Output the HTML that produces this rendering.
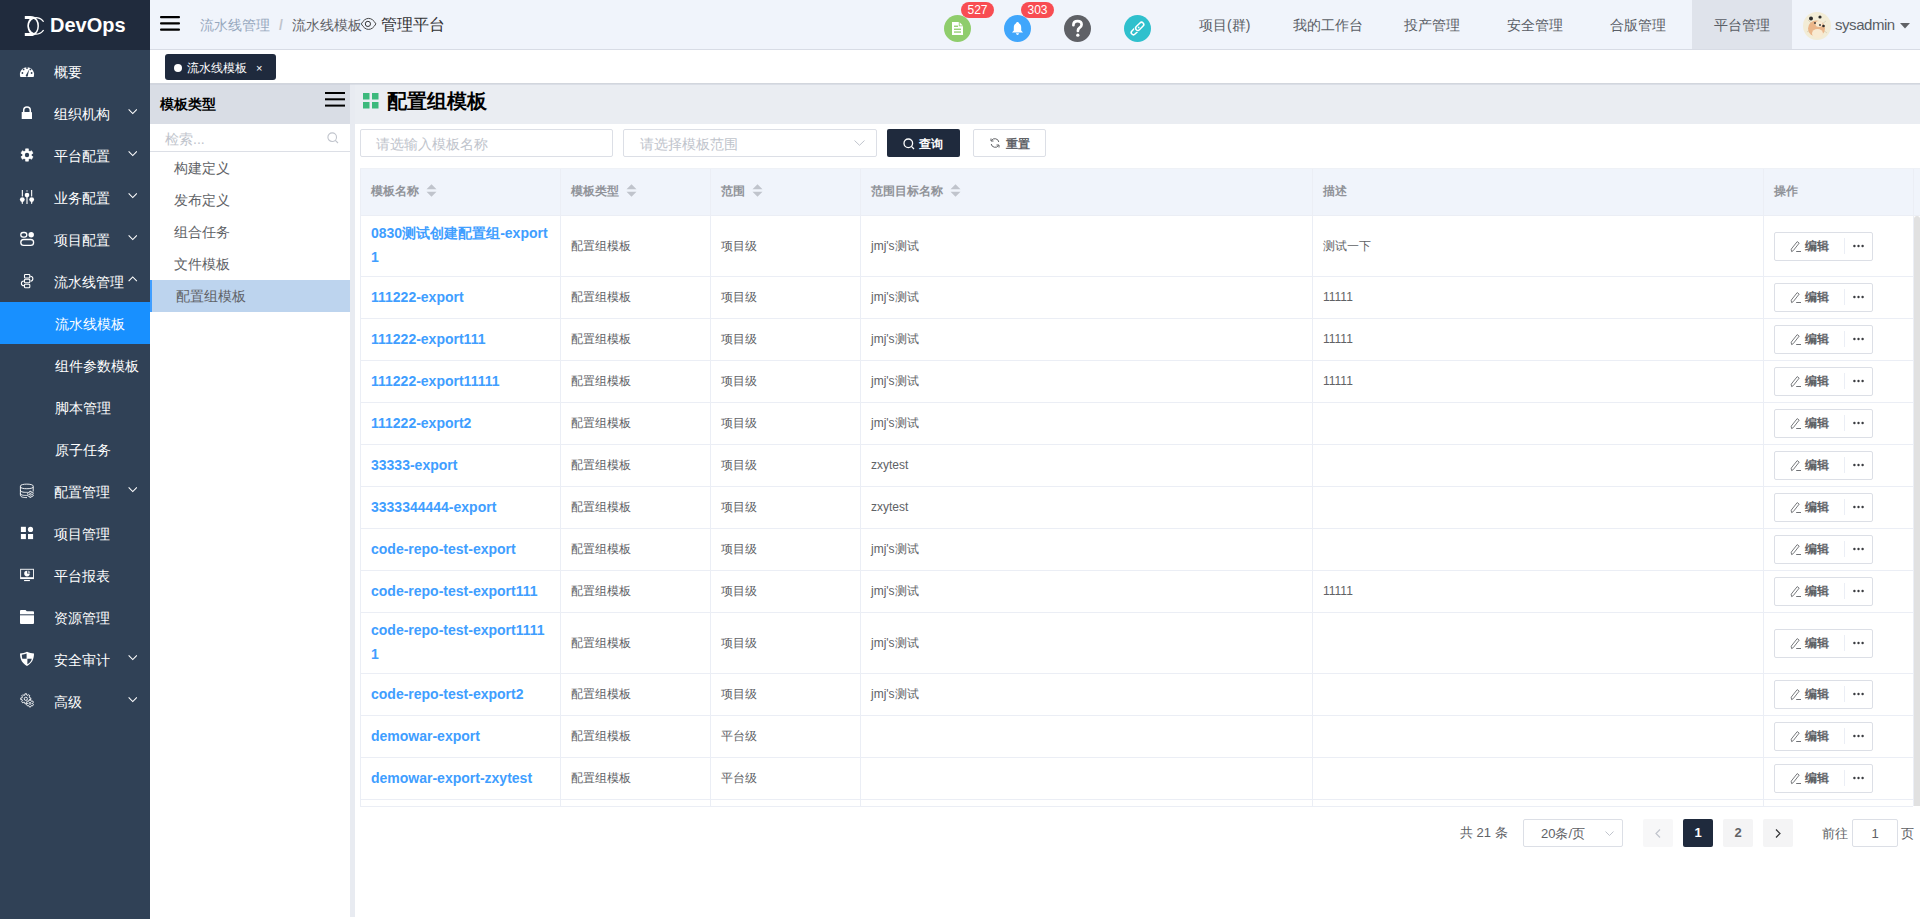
<!DOCTYPE html><html><head><meta charset="utf-8"><style>
*{box-sizing:border-box;margin:0;padding:0}
html,body{width:1920px;height:919px;overflow:hidden;background:#fff;font-family:"Liberation Sans",sans-serif;}
.ab{position:absolute}
.side{position:absolute;left:0;top:0;width:150px;height:919px;background:#304156}
.logo{position:absolute;left:0;top:0;width:150px;height:50px;background:#202b3d}
.mi{position:absolute;left:0;width:150px;height:42px;color:#fff;font-size:14px;line-height:42px}
.mi .t{position:absolute;left:54px;top:1px;white-space:nowrap}
.mi .ic{position:absolute;left:20px;top:14px;width:14px;height:14px}
.mi .ar{position:absolute;left:127.5px;top:17px;width:9.5px;height:5.5px}
.hdr{position:absolute;left:150px;top:0;width:1770px;height:50px;background:#f0f4fb;border-bottom:1px solid #d8dce5}
.nav{position:absolute;top:1px;height:49px;line-height:49px;font-size:14px;color:#5a5e66;white-space:nowrap}
.circ{position:absolute;top:15px;width:27px;height:27px;border-radius:50%}
.badge{position:absolute;top:2px;height:16px;border-radius:8px;background:#f84c52;color:#fff;font-size:12px;line-height:16px;text-align:center}
.tags{position:absolute;left:150px;top:50px;width:1770px;height:33px;background:#fff}
.t12{font-size:12px;color:#606266;white-space:nowrap}
.cellb{position:absolute;background:#ebeef5}
</style></head><body>
<div class="side">
<div class="logo">
<svg class="ab" style="left:0;top:0" width="50" height="50" viewBox="0 0 50 50"><path d="M24.8 16 H30.5 C33.5 16 35.5 17.2 36.6 18.6 L35.6 19.6 C34.6 19.1 33 19 31 19 H24.8 Z" fill="#fff"/><path d="M24.8 36 H30.5 C33.5 36 35.5 34.8 36.6 33.4 L35.6 32.4 C34.6 32.9 33 33 31 33 H24.8 Z" fill="#fff"/><ellipse cx="33.2" cy="25.9" rx="5" ry="8" stroke="#fff" stroke-width="1.5" fill="none"/><path d="M43.6 21.8 A8.2 8.2 0 1 0 43.6 30" stroke="#fff" stroke-width="1.2" fill="none"/></svg>
<div class="ab" style="left:50px;top:12px;font-size:20px;font-weight:bold;color:#fff;line-height:26px">DevOps</div>
</div>
<div class="mi" style="top:50px;">
<span class="t" style="left:54px">概要</span>
</div>
<div class="mi" style="top:92px;">
<span class="t" style="left:54px">组织机构</span>
<svg class="ar" viewBox="0 0 10 6"><path d="M0.5 0.5 L5 5 L9.5 0.5" stroke="#fff" stroke-width="1.2" fill="none"/></svg>
</div>
<div class="mi" style="top:134px;">
<span class="t" style="left:54px">平台配置</span>
<svg class="ar" viewBox="0 0 10 6"><path d="M0.5 0.5 L5 5 L9.5 0.5" stroke="#fff" stroke-width="1.2" fill="none"/></svg>
</div>
<div class="mi" style="top:176px;">
<span class="t" style="left:54px">业务配置</span>
<svg class="ar" viewBox="0 0 10 6"><path d="M0.5 0.5 L5 5 L9.5 0.5" stroke="#fff" stroke-width="1.2" fill="none"/></svg>
</div>
<div class="mi" style="top:218px;">
<span class="t" style="left:54px">项目配置</span>
<svg class="ar" viewBox="0 0 10 6"><path d="M0.5 0.5 L5 5 L9.5 0.5" stroke="#fff" stroke-width="1.2" fill="none"/></svg>
</div>
<div class="mi" style="top:260px;">
<span class="t" style="left:54px">流水线管理</span>
<svg class="ar" style="left:128px;top:16px" viewBox="0 0 10 6"><path d="M0.5 5.5 L5 1 L9.5 5.5" stroke="#fff" stroke-width="1.2" fill="none"/></svg>
</div>
<div class="mi" style="top:302px;background:#1890ff;">
<span class="t" style="left:55px">流水线模板</span>
</div>
<div class="mi" style="top:344px;">
<span class="t" style="left:55px">组件参数模板</span>
</div>
<div class="mi" style="top:386px;">
<span class="t" style="left:55px">脚本管理</span>
</div>
<div class="mi" style="top:428px;">
<span class="t" style="left:55px">原子任务</span>
</div>
<div class="mi" style="top:470px;">
<span class="t" style="left:54px">配置管理</span>
<svg class="ar" viewBox="0 0 10 6"><path d="M0.5 0.5 L5 5 L9.5 0.5" stroke="#fff" stroke-width="1.2" fill="none"/></svg>
</div>
<div class="mi" style="top:512px;">
<span class="t" style="left:54px">项目管理</span>
</div>
<div class="mi" style="top:554px;">
<span class="t" style="left:54px">平台报表</span>
</div>
<div class="mi" style="top:596px;">
<span class="t" style="left:54px">资源管理</span>
</div>
<div class="mi" style="top:638px;">
<span class="t" style="left:54px">安全审计</span>
<svg class="ar" viewBox="0 0 10 6"><path d="M0.5 0.5 L5 5 L9.5 0.5" stroke="#fff" stroke-width="1.2" fill="none"/></svg>
</div>
<div class="mi" style="top:680px;">
<span class="t" style="left:54px">高级</span>
<svg class="ar" viewBox="0 0 10 6"><path d="M0.5 0.5 L5 5 L9.5 0.5" stroke="#fff" stroke-width="1.2" fill="none"/></svg>
</div>
<svg class="ab" style="left:0;top:0;z-index:2" width="150" height="919" viewBox="0 0 150 919">
<!-- dashboard -->
<path d="M20.4 77 A7.1 7.1 0 1 1 33.6 77 Z" fill="#fff"/>
<circle cx="22.4" cy="73" r="0.9" fill="#304156"/><circle cx="23.6" cy="69.4" r="0.9" fill="#304156"/><circle cx="27" cy="68" r="0.9" fill="#304156"/><circle cx="30.4" cy="69.4" r="0.9" fill="#304156"/><circle cx="31.6" cy="73" r="0.9" fill="#304156"/>
<path d="M29.2 69.6 L27.9 75.2 A1.1 1.1 0 1 1 26.1 74.8 Z" fill="#304156"/>
<!-- lock -->
<path d="M23.7 112 V110.2 A3.3 3.3 0 0 1 30.3 110.2 V112" stroke="#fff" stroke-width="1.5" fill="none"/>
<rect x="21.7" y="112" width="10.3" height="7.1" rx="0.4" fill="#fff"/>
<!-- gear -->
<path d="M25.54 150.74 L25.56 148.87 L28.44 148.87 L28.46 150.74 L29.95 151.61 L31.59 150.69 L33.03 153.18 L31.42 154.14 L31.42 155.86 L33.03 156.82 L31.59 159.31 L29.95 158.39 L28.46 159.26 L28.44 161.13 L25.56 161.13 L25.54 159.26 L24.05 158.39 L22.41 159.31 L20.97 156.82 L22.58 155.86 L22.58 154.14 L20.97 153.18 L22.41 150.69 L24.05 151.61 Z" fill="#fff" stroke="#fff" stroke-width="0.6" stroke-linejoin="round"/>
<circle cx="27" cy="155" r="2.2" fill="#304156"/>
<!-- sliders -->
<g fill="#fff">
<rect x="21.8" y="190" width="1.1" height="6.5"/><rect x="31.1" y="190" width="1.1" height="6.5"/>
<rect x="26.4" y="190" width="1.2" height="1.8" opacity="0.6"/>
<circle cx="22.3" cy="199.6" r="2.4"/><path d="M21.5 201 H23.1 L22.7 204 H21.9 Z"/>
<circle cx="31.7" cy="199.6" r="2.4"/><path d="M30.9 201 H32.5 L32.1 204 H31.3 Z"/>
<circle cx="27" cy="195.1" r="2.3"/><rect x="26.3" y="196" width="1.4" height="8" opacity="0.8"/>
</g>
<!-- project config -->
<rect x="20.8" y="232.5" width="6" height="4.6" rx="2.3" stroke="#fff" stroke-width="1.3" fill="none"/>
<circle cx="31.2" cy="234.8" r="2.7" fill="#fff"/>
<rect x="20.8" y="239.5" width="12.8" height="5.8" rx="2.9" stroke="#fff" stroke-width="1.3" fill="none"/>
<!-- pipeline -->
<g stroke="#fff" stroke-width="1.1" fill="none">
<rect x="24.5" y="274.5" width="5.3" height="3.5" rx="0.8"/><rect x="24.5" y="279.3" width="5.3" height="3.5" rx="0.8"/><rect x="24.5" y="284.2" width="5.3" height="3.5" rx="0.8"/>
<path d="M30.3 276.3 C33.5 276.3 33.8 280.7 30.6 281.3"/>
<path d="M24 281 C20.5 281.3 20.5 285.5 24 285.8"/>
</g>
<!-- db -->
<g stroke="#fff" stroke-width="0.9" fill="none">
<path d="M20.4 486 C20.4 483.5 33.2 483.5 33.2 486 V491.5"/>
<path d="M20.4 486 V495 C20.4 497.3 24 497.6 27 497.6"/>
<path d="M20.4 487 C20.4 489.3 33.2 489.3 33.2 487"/>
<path d="M20.4 490.2 C20.4 492.3 25 492.5 27.5 492.3"/>
<path d="M20.4 493.4 C20.4 495.3 24 495.5 26.8 495.4"/>
<path d="M29.65 492.12 L29.69 491.28 L31.11 491.28 L31.15 492.12 L31.91 492.56 L32.66 492.18 L33.37 493.40 L32.66 493.86 L32.66 494.74 L33.37 495.20 L32.66 496.42 L31.91 496.04 L31.15 496.48 L31.11 497.32 L29.69 497.32 L29.65 496.48 L28.89 496.04 L28.14 496.42 L27.43 495.20 L28.14 494.74 L28.14 493.86 L27.43 493.40 L28.14 492.18 L28.89 492.56 Z" stroke-linejoin="round"/>
<circle cx="30.4" cy="494.3" r="0.9"/>
</g>
<!-- grid -->
<g fill="#fff">
<rect x="20.9" y="526.8" width="5" height="5.2"/>
<circle cx="30.5" cy="529.4" r="2.6"/>
<rect x="20.9" y="534" width="5" height="5.1"/>
<rect x="28" y="534" width="5.1" height="5.1"/>
</g>
<!-- monitor -->
<rect x="20.6" y="569.3" width="12.9" height="9.3" stroke="#fff" stroke-width="1" fill="none" opacity="0.9"/>
<rect x="20.6" y="577.2" width="12.9" height="1.8" fill="#fff"/>
<rect x="24.1" y="580" width="5.8" height="1.1" fill="#fff"/>
<path d="M27 573.6 V570.8 A2.8 2.8 0 1 0 29.8 573.6 Z" fill="#fff"/>
<path d="M27.6 573 V570.4 A2.6 2.6 0 0 1 30.2 573 Z" fill="#fff" opacity="0.6"/>
<!-- folder -->
<path d="M20 611 A1 1 0 0 1 21 610 H25.5 L26.8 611.3 H33 A1 1 0 0 1 34 612.3 V623 A1 1 0 0 1 33 624 H21 A1 1 0 0 1 20 623 Z" fill="#fff"/>
<rect x="20" y="614.3" width="14" height="1" fill="#304156"/>
<!-- shield -->
<path d="M27 651.8 C29.5 653 31.5 653.4 34 653.6 C34 660 31.5 663.6 27 666 C22.5 663.6 20 660 20 653.6 C22.5 653.4 24.5 653 27 651.8 Z" fill="#fff"/>
<path d="M26.6 653.6 V658.7 H22.3 C22 657.3 21.8 656 21.8 654.8 C23.5 654.6 25 654.3 26.6 653.6 Z" fill="#304156"/>
<path d="M27.4 658.7 H31.8 C31.2 661.2 29.8 663 27.4 664.3 Z" fill="#304156"/>
<!-- advanced gears -->
<g stroke="#fff" stroke-width="0.9" fill="none" stroke-linejoin="round">
<path d="M24.87 695.12 L24.92 693.78 L26.68 693.78 L26.73 695.12 L27.74 695.53 L28.73 694.63 L29.97 695.87 L29.07 696.86 L29.48 697.87 L30.82 697.92 L30.82 699.68 L29.48 699.73 L29.07 700.74 L29.97 701.73 L28.73 702.97 L27.74 702.07 L26.73 702.48 L26.68 703.82 L24.92 703.82 L24.87 702.48 L23.86 702.07 L22.87 702.97 L21.63 701.73 L22.53 700.74 L22.12 699.73 L20.78 699.68 L20.78 697.92 L22.12 697.87 L22.53 696.86 L21.63 695.87 L22.87 694.63 L23.86 695.53 Z"/>
<circle cx="25.8" cy="698.8" r="1.6"/>
<path d="M29.12 700.85 L29.18 699.90 L30.82 699.90 L30.88 700.85 L31.77 701.36 L32.62 700.94 L33.45 702.36 L32.65 702.88 L32.65 703.92 L33.45 704.44 L32.62 705.86 L31.77 705.44 L30.88 705.95 L30.82 706.90 L29.18 706.90 L29.12 705.95 L28.23 705.44 L27.38 705.86 L26.55 704.44 L27.35 703.92 L27.35 702.88 L26.55 702.36 L27.38 700.94 L28.23 701.36 Z" fill="#304156"/>
<circle cx="30" cy="703.4" r="1"/>
</g>
</svg>
</div>
<div class="hdr">
<svg class="ab" style="left:10px;top:16px" width="20" height="15" viewBox="0 0 20 15"><rect x="0" y="0" width="20" height="2.2" rx="1" fill="#000"/><rect x="0" y="6.3" width="20" height="2.2" rx="1" fill="#000"/><rect x="0" y="12.6" width="20" height="2.2" rx="1" fill="#000"/></svg>
<div class="ab" style="left:50px;top:1px;height:49px;line-height:49px;font-size:14px;color:#97a8be;white-space:nowrap">流水线管理</div>
<div class="ab" style="left:129px;top:1px;height:49px;line-height:49px;font-size:14px;color:#c0c4cc;font-weight:bold">/</div>
<div class="ab" style="left:142px;top:1px;height:49px;line-height:49px;font-size:14px;color:#606266;white-space:nowrap">流水线模板</div>
<svg class="ab" style="left:210px;top:17px" width="17" height="14" viewBox="360 17 17 14"><path d="M361.3 23.9 C363.5 20.2 365.8 18.4 368.6 18.4 C371.4 18.4 373.7 20.2 375.9 23.9 C373.7 27.6 371.4 29.4 368.6 29.4 C365.8 29.4 363.5 27.6 361.3 23.9 Z" stroke="#333" stroke-width="0.9" fill="none"/><circle cx="367.9" cy="23.9" r="2.6" stroke="#333" stroke-width="1" fill="none"/></svg>
<div class="ab" style="left:231px;top:0px;height:49px;line-height:49px;font-size:16px;color:#303133;white-space:nowrap">管理平台</div>
</div>
<div class="circ" style="left:944px;background:#8fcd6c"><svg class="ab" style="left:8px;top:7px" width="11" height="13" viewBox="0 0 11 13"><path d="M0 0 H6.8 V4.2 H11 V13 H0 Z" fill="#fff"/><path d="M7.6 0.2 L10.8 3.4 H7.6 Z" fill="#fff"/><rect x="2" y="3.6" width="4" height="1.3" fill="#8fcd6c"/><rect x="2" y="6.6" width="7" height="1.3" fill="#8fcd6c"/><rect x="2" y="9.4" width="7" height="1.3" fill="#8fcd6c"/></svg></div>
<div class="badge" style="left:961px;width:33px">527</div>
<div class="circ" style="left:1004px;background:#40a6fb"><svg class="ab" style="left:8px;top:7px" width="11" height="14" viewBox="0 0 11 14"><path d="M5.5 0 C6.3 0 6.9 0.7 7.2 1.4 C8.8 2 9.2 3.8 9.2 5.8 V8.6 L11 10.6 H0 L1.8 8.6 V5.8 C1.8 3.8 2.2 2 3.8 1.4 C4.1 0.7 4.7 0 5.5 0 Z" fill="#fff"/><path d="M4 11.3 H7 C6.8 12.4 6.2 13 5.5 13 C4.8 13 4.2 12.4 4 11.3 Z" fill="#fff"/></svg></div>
<div class="badge" style="left:1021px;width:33px">303</div>
<div class="circ" style="left:1064px;background:#5f6166"><svg class="ab" style="left:0;top:0" width="27" height="27" viewBox="1064 15 27 27"><path d="M1073.4 25.2 C1073.4 22.6 1075.3 21.2 1077.6 21.2 C1080.1 21.2 1081.6 22.7 1081.6 24.8 C1081.6 26.6 1080.4 27.4 1079.2 28.2 C1078.3 28.8 1077.9 29.4 1077.9 30.9" stroke="#fff" stroke-width="2.7" fill="none" stroke-linecap="round"/><circle cx="1077.8" cy="35.2" r="1.65" fill="#fff"/></svg></div>
<div class="circ" style="left:1124px;background:#2fc0cd"><svg class="ab" style="left:0;top:0" width="27" height="27" viewBox="1124 15 27 27"><g transform="rotate(-45 1137.5 28.5)" fill="none"><rect x="1129.6" y="26.3" width="9.6" height="4.4" rx="2.2" stroke="#fff" stroke-width="1.5"/><rect x="1135.8" y="26.3" width="9.6" height="4.4" rx="2.2" stroke="#2fc0cd" stroke-width="3"/><rect x="1135.8" y="26.3" width="9.6" height="4.4" rx="2.2" stroke="#fff" stroke-width="1.5"/></g></svg></div>
<div class="ab" style="left:1692px;top:0;width:100px;height:49px;background:#dfe3eb"></div>
<div class="nav" style="left:1199px">项目(群)</div>
<div class="nav" style="left:1293px">我的工作台</div>
<div class="nav" style="left:1404px">投产管理</div>
<div class="nav" style="left:1507px">安全管理</div>
<div class="nav" style="left:1610px">合版管理</div>
<div class="nav" style="left:1714px">平台管理</div>
<svg class="ab" style="left:1803px;top:12px" width="28" height="28" viewBox="0 0 28 28"><circle cx="14" cy="14" r="14" fill="#f2ecd6"/><path d="M5 8 L9 12 M23 9 L19 12 M4 20 L8 17 M24 21 L20 18" stroke="#cfc6ad" stroke-width="0.6"/><ellipse cx="13.5" cy="16.5" rx="8.5" ry="8" fill="#eab589"/><ellipse cx="14.5" cy="21.5" rx="5.5" ry="4.5" fill="#f8ead2"/><ellipse cx="16" cy="12" rx="3.5" ry="3" fill="#f8ead2"/><circle cx="8" cy="6.5" r="2" fill="#2b2b2b"/><circle cx="17" cy="5" r="1.6" fill="#2b2b2b"/><circle cx="12" cy="11" r="0.9" fill="#333"/><circle cx="17" cy="13" r="0.9" fill="#333"/><circle cx="20.5" cy="14" r="1.3" fill="#2b2b2b"/></svg>
<div class="nav" style="left:1835px;top:0;font-size:15px;letter-spacing:-0.45px;color:#5a5e66">sysadmin</div>
<svg class="ab" style="left:1900px;top:23px" width="10" height="6" viewBox="0 0 10 6"><path d="M0 0 H10 L5 5.5 Z" fill="#606266"/></svg>
<div class="tags"></div>
<div class="ab" style="left:165px;top:54px;width:111px;height:26px;background:#1f2a3d;border-radius:3px"></div>
<div class="ab" style="left:174px;top:64px;width:8px;height:8px;border-radius:50%;background:#fff"></div>
<div class="ab" style="left:187px;top:55px;height:26px;line-height:26px;font-size:12px;color:#fff;white-space:nowrap">流水线模板</div>
<div class="ab" style="left:256px;top:55px;height:26px;line-height:26px;font-size:11px;color:#fff">×</div>
<div class="ab" style="left:150px;top:83px;width:1770px;height:1px;background:#d2d6dd"></div>
<div class="ab" style="left:150px;top:84px;width:200px;height:835px;background:#fff"></div>
<div class="ab" style="left:150px;top:84px;width:200px;height:40px;background:#d9dde5"></div>
<div class="ab" style="left:160px;top:84px;height:40px;line-height:40px;font-size:14px;font-weight:bold;color:#000;white-space:nowrap">模板类型</div>
<svg class="ab" style="left:325px;top:92px" width="20" height="15" viewBox="0 0 20 15"><rect x="0" y="0" width="20" height="2" fill="#000"/><rect x="0" y="6.3" width="20" height="2" fill="#000"/><rect x="0" y="12.6" width="20" height="2" fill="#000"/></svg>
<div class="ab" style="left:150px;top:124px;width:200px;height:28px;border-bottom:1px solid #dcdfe6"></div>
<div class="ab" style="left:165px;top:125px;height:28px;line-height:28px;font-size:14px;color:#c0c4cc;white-space:nowrap">检索...</div>
<svg class="ab" style="left:327px;top:132px" width="12" height="12" viewBox="0 0 12 12"><circle cx="5.2" cy="5.2" r="4.3" stroke="#c0c4cc" stroke-width="1.1" fill="none"/><path d="M8.3 8.3 L11 11" stroke="#c0c4cc" stroke-width="1.1"/></svg>
<div class="ab" style="left:174px;top:152px;height:32px;line-height:32px;font-size:14px;color:#606266;white-space:nowrap">构建定义</div>
<div class="ab" style="left:174px;top:184px;height:32px;line-height:32px;font-size:14px;color:#606266;white-space:nowrap">发布定义</div>
<div class="ab" style="left:174px;top:216px;height:32px;line-height:32px;font-size:14px;color:#606266;white-space:nowrap">组合任务</div>
<div class="ab" style="left:174px;top:248px;height:32px;line-height:32px;font-size:14px;color:#606266;white-space:nowrap">文件模板</div>
<div class="ab" style="left:150px;top:280px;width:200px;height:32px;background:#bdd4ee"></div>
<div class="ab" style="left:150px;top:280px;width:2px;height:32px;background:#409eff"></div>
<div class="ab" style="left:176px;top:280px;height:32px;line-height:32px;font-size:14px;color:#606266;white-space:nowrap">配置组模板</div>
<div class="ab" style="left:350px;top:84px;width:5px;height:833px;background:#e8ebf1"></div>
<div class="ab" style="left:355px;top:84px;width:1565px;height:40px;background:#eaedf2"></div>
<div class="ab" style="left:150px;top:84px;width:1770px;height:1px;background:rgba(200,205,214,0.45)"></div>
<svg class="ab" style="left:363px;top:93px" width="16" height="16" viewBox="0 0 16 16"><rect x="0" y="0" width="6.5" height="6.5" fill="#3cb97c"/><rect x="9" y="0" width="6.5" height="6.5" fill="#3cb97c"/><rect x="0" y="9" width="6.5" height="6.5" fill="#3cb97c"/><rect x="9" y="9" width="6.5" height="6.5" fill="#3cb97c"/></svg>
<div class="ab" style="left:387px;top:83px;height:36px;line-height:36px;font-size:20px;font-weight:bold;color:#000;white-space:nowrap">配置组模板</div>
<div class="ab" style="left:360px;top:129px;width:253px;height:28px;border:1px solid #dcdfe6;border-radius:2px"></div>
<div class="ab" style="left:376px;top:130px;height:28px;line-height:28px;font-size:14px;color:#c0c4cc;white-space:nowrap">请选输入模板名称</div>
<div class="ab" style="left:623px;top:129px;width:254px;height:28px;border:1px solid #dcdfe6;border-radius:2px"></div>
<div class="ab" style="left:640px;top:130px;height:28px;line-height:28px;font-size:14px;color:#c0c4cc;white-space:nowrap">请选择模板范围</div>
<svg class="ab" style="left:854px;top:140px" width="11" height="6" viewBox="0 0 11 6"><path d="M0.5 0.5 L5.5 5.3 L10.5 0.5" stroke="#c0c4cc" stroke-width="1" fill="none"/></svg>
<div class="ab" style="left:887px;top:129px;width:73px;height:28px;background:#1f2a3d;border-radius:2px"></div>
<svg class="ab" style="left:903px;top:138px" width="12" height="12" viewBox="0 0 12 12"><circle cx="5.3" cy="5.3" r="4.3" stroke="#fff" stroke-width="1.3" fill="none"/><path d="M8.4 8.4 L11 11" stroke="#fff" stroke-width="1.3"/></svg>
<div class="ab" style="left:919px;top:130px;height:28px;line-height:28px;font-size:12px;color:#fff;font-weight:bold;white-space:nowrap">查询</div>
<div class="ab" style="left:973px;top:129px;width:73px;height:28px;border:1px solid #dcdfe6;border-radius:2px"></div>
<svg class="ab" style="left:990px;top:138px" width="10" height="10" viewBox="0 0 10 10"><path d="M8.8 4 A4 4 0 0 0 1.5 2.5 M1.2 6 A4 4 0 0 0 8.5 7.5" stroke="#606266" stroke-width="1" fill="none"/><path d="M1 0.5 V3 H3.5 M9 9.5 V7 H6.5" stroke="#606266" stroke-width="1" fill="none"/></svg>
<div class="ab" style="left:1006px;top:130px;height:28px;line-height:28px;font-size:12px;color:#606266;font-weight:bold;white-space:nowrap">重置</div>
<div class="ab" style="left:360px;top:168px;width:1560px;height:48px;background:#f0f4fb"></div>
<div class="cellb" style="left:360px;top:168px;width:1px;height:638px"></div>
<div class="cellb" style="left:360px;top:806px;width:1553px;height:1px"></div>
<div class="cellb" style="left:560px;top:168px;width:1px;height:638px"></div>
<div class="cellb" style="left:710px;top:168px;width:1px;height:638px"></div>
<div class="cellb" style="left:860px;top:168px;width:1px;height:638px"></div>
<div class="cellb" style="left:1312px;top:168px;width:1px;height:638px"></div>
<div class="cellb" style="left:1763px;top:168px;width:1px;height:638px"></div>
<div class="cellb" style="left:1913px;top:168px;width:1px;height:638px"></div>
<div class="cellb" style="left:360px;top:215px;width:1560px;height:1px"></div>
<div class="cellb" style="left:360px;top:168px;width:1560px;height:1px;background:#eef1f6"></div>
<div class="cellb" style="left:360px;top:276px;width:1553px;height:1px"></div>
<div class="cellb" style="left:360px;top:318px;width:1553px;height:1px"></div>
<div class="cellb" style="left:360px;top:360px;width:1553px;height:1px"></div>
<div class="cellb" style="left:360px;top:402px;width:1553px;height:1px"></div>
<div class="cellb" style="left:360px;top:444px;width:1553px;height:1px"></div>
<div class="cellb" style="left:360px;top:486px;width:1553px;height:1px"></div>
<div class="cellb" style="left:360px;top:528px;width:1553px;height:1px"></div>
<div class="cellb" style="left:360px;top:570px;width:1553px;height:1px"></div>
<div class="cellb" style="left:360px;top:612px;width:1553px;height:1px"></div>
<div class="cellb" style="left:360px;top:673px;width:1553px;height:1px"></div>
<div class="cellb" style="left:360px;top:715px;width:1553px;height:1px"></div>
<div class="cellb" style="left:360px;top:757px;width:1553px;height:1px"></div>
<div class="cellb" style="left:360px;top:799px;width:1553px;height:1px"></div>
<div class="ab" style="left:1914px;top:216px;width:6px;height:590px;background:#e1e1e1;border-radius:3px 3px 0 0"></div>
<div class="ab" style="left:371px;top:168px;height:47px;line-height:47px;font-size:12px;font-weight:bold;color:#909399;white-space:nowrap">模板名称
<svg style="display:inline-block;vertical-align:middle;margin-left:4px;margin-top:-2px" width="11" height="13" viewBox="0 0 11 13"><path d="M5.5 0.3 L10.5 5.3 H0.5 Z" fill="#c0c4cc"/><path d="M5.5 12.7 L10.5 7.7 H0.5 Z" fill="#c0c4cc"/></svg>
</div>
<div class="ab" style="left:571px;top:168px;height:47px;line-height:47px;font-size:12px;font-weight:bold;color:#909399;white-space:nowrap">模板类型
<svg style="display:inline-block;vertical-align:middle;margin-left:4px;margin-top:-2px" width="11" height="13" viewBox="0 0 11 13"><path d="M5.5 0.3 L10.5 5.3 H0.5 Z" fill="#c0c4cc"/><path d="M5.5 12.7 L10.5 7.7 H0.5 Z" fill="#c0c4cc"/></svg>
</div>
<div class="ab" style="left:721px;top:168px;height:47px;line-height:47px;font-size:12px;font-weight:bold;color:#909399;white-space:nowrap">范围
<svg style="display:inline-block;vertical-align:middle;margin-left:4px;margin-top:-2px" width="11" height="13" viewBox="0 0 11 13"><path d="M5.5 0.3 L10.5 5.3 H0.5 Z" fill="#c0c4cc"/><path d="M5.5 12.7 L10.5 7.7 H0.5 Z" fill="#c0c4cc"/></svg>
</div>
<div class="ab" style="left:871px;top:168px;height:47px;line-height:47px;font-size:12px;font-weight:bold;color:#909399;white-space:nowrap">范围目标名称
<svg style="display:inline-block;vertical-align:middle;margin-left:4px;margin-top:-2px" width="11" height="13" viewBox="0 0 11 13"><path d="M5.5 0.3 L10.5 5.3 H0.5 Z" fill="#c0c4cc"/><path d="M5.5 12.7 L10.5 7.7 H0.5 Z" fill="#c0c4cc"/></svg>
</div>
<div class="ab" style="left:1323px;top:168px;height:47px;line-height:47px;font-size:12px;font-weight:bold;color:#909399;white-space:nowrap">描述
</div>
<div class="ab" style="left:1774px;top:168px;height:47px;line-height:47px;font-size:12px;font-weight:bold;color:#909399;white-space:nowrap">操作
</div>
<div class="ab" style="left:371px;top:221px;line-height:24px;font-size:14px;font-weight:bold;color:#409eff;white-space:nowrap">0830测试创建配置组-export<br>1</div>
<div class="ab t12" style="left:571px;top:234px;line-height:24px">配置组模板</div>
<div class="ab t12" style="left:721px;top:234px;line-height:24px">项目级</div>
<div class="ab t12" style="left:871px;top:234px;line-height:24px">jmj's测试</div>
<div class="ab t12" style="left:1323px;top:234px;line-height:24px">测试一下</div>
<div class="ab" style="left:1774px;top:232px;width:99px;height:29px;border:1px solid #dcdfe6;border-radius:2px;background:#fff"></div>
<div class="ab" style="left:1844px;top:238px;width:1px;height:16px;background:#ebeef5"></div>
<svg class="ab" style="left:1790px;top:240px" width="12" height="13" viewBox="0 0 12 13"><path d="M1.6 11.6 L1.2 9.2 L7.2 1.6 L9.2 3.1 L3.2 10.7 Z" stroke="#606266" stroke-width="0.85" fill="none" stroke-linejoin="round"/><path d="M6.2 11.5 H11" stroke="#606266" stroke-width="0.9"/></svg>
<div class="ab" style="left:1805px;top:232px;height:29px;line-height:29px;font-size:12px;font-weight:bold;color:#606266;white-space:nowrap">编辑</div>
<svg class="ab" style="left:1853px;top:244px" width="11" height="4" viewBox="0 0 11 4"><circle cx="1.4" cy="2" r="1.2" fill="#3a3c40"/><circle cx="5.5" cy="2" r="1.2" fill="#3a3c40"/><circle cx="9.6" cy="2" r="1.2" fill="#3a3c40"/></svg>
<div class="ab" style="left:371px;top:285px;line-height:24px;font-size:14px;font-weight:bold;color:#409eff;white-space:nowrap">111222-export</div>
<div class="ab t12" style="left:571px;top:285px;line-height:24px">配置组模板</div>
<div class="ab t12" style="left:721px;top:285px;line-height:24px">项目级</div>
<div class="ab t12" style="left:871px;top:285px;line-height:24px">jmj's测试</div>
<div class="ab t12" style="left:1323px;top:285px;line-height:24px">11111</div>
<div class="ab" style="left:1774px;top:283px;width:99px;height:29px;border:1px solid #dcdfe6;border-radius:2px;background:#fff"></div>
<div class="ab" style="left:1844px;top:289px;width:1px;height:16px;background:#ebeef5"></div>
<svg class="ab" style="left:1790px;top:291px" width="12" height="13" viewBox="0 0 12 13"><path d="M1.6 11.6 L1.2 9.2 L7.2 1.6 L9.2 3.1 L3.2 10.7 Z" stroke="#606266" stroke-width="0.85" fill="none" stroke-linejoin="round"/><path d="M6.2 11.5 H11" stroke="#606266" stroke-width="0.9"/></svg>
<div class="ab" style="left:1805px;top:283px;height:29px;line-height:29px;font-size:12px;font-weight:bold;color:#606266;white-space:nowrap">编辑</div>
<svg class="ab" style="left:1853px;top:295px" width="11" height="4" viewBox="0 0 11 4"><circle cx="1.4" cy="2" r="1.2" fill="#3a3c40"/><circle cx="5.5" cy="2" r="1.2" fill="#3a3c40"/><circle cx="9.6" cy="2" r="1.2" fill="#3a3c40"/></svg>
<div class="ab" style="left:371px;top:327px;line-height:24px;font-size:14px;font-weight:bold;color:#409eff;white-space:nowrap">111222-export111</div>
<div class="ab t12" style="left:571px;top:327px;line-height:24px">配置组模板</div>
<div class="ab t12" style="left:721px;top:327px;line-height:24px">项目级</div>
<div class="ab t12" style="left:871px;top:327px;line-height:24px">jmj's测试</div>
<div class="ab t12" style="left:1323px;top:327px;line-height:24px">11111</div>
<div class="ab" style="left:1774px;top:325px;width:99px;height:29px;border:1px solid #dcdfe6;border-radius:2px;background:#fff"></div>
<div class="ab" style="left:1844px;top:331px;width:1px;height:16px;background:#ebeef5"></div>
<svg class="ab" style="left:1790px;top:333px" width="12" height="13" viewBox="0 0 12 13"><path d="M1.6 11.6 L1.2 9.2 L7.2 1.6 L9.2 3.1 L3.2 10.7 Z" stroke="#606266" stroke-width="0.85" fill="none" stroke-linejoin="round"/><path d="M6.2 11.5 H11" stroke="#606266" stroke-width="0.9"/></svg>
<div class="ab" style="left:1805px;top:325px;height:29px;line-height:29px;font-size:12px;font-weight:bold;color:#606266;white-space:nowrap">编辑</div>
<svg class="ab" style="left:1853px;top:337px" width="11" height="4" viewBox="0 0 11 4"><circle cx="1.4" cy="2" r="1.2" fill="#3a3c40"/><circle cx="5.5" cy="2" r="1.2" fill="#3a3c40"/><circle cx="9.6" cy="2" r="1.2" fill="#3a3c40"/></svg>
<div class="ab" style="left:371px;top:369px;line-height:24px;font-size:14px;font-weight:bold;color:#409eff;white-space:nowrap">111222-export11111</div>
<div class="ab t12" style="left:571px;top:369px;line-height:24px">配置组模板</div>
<div class="ab t12" style="left:721px;top:369px;line-height:24px">项目级</div>
<div class="ab t12" style="left:871px;top:369px;line-height:24px">jmj's测试</div>
<div class="ab t12" style="left:1323px;top:369px;line-height:24px">11111</div>
<div class="ab" style="left:1774px;top:367px;width:99px;height:29px;border:1px solid #dcdfe6;border-radius:2px;background:#fff"></div>
<div class="ab" style="left:1844px;top:373px;width:1px;height:16px;background:#ebeef5"></div>
<svg class="ab" style="left:1790px;top:375px" width="12" height="13" viewBox="0 0 12 13"><path d="M1.6 11.6 L1.2 9.2 L7.2 1.6 L9.2 3.1 L3.2 10.7 Z" stroke="#606266" stroke-width="0.85" fill="none" stroke-linejoin="round"/><path d="M6.2 11.5 H11" stroke="#606266" stroke-width="0.9"/></svg>
<div class="ab" style="left:1805px;top:367px;height:29px;line-height:29px;font-size:12px;font-weight:bold;color:#606266;white-space:nowrap">编辑</div>
<svg class="ab" style="left:1853px;top:379px" width="11" height="4" viewBox="0 0 11 4"><circle cx="1.4" cy="2" r="1.2" fill="#3a3c40"/><circle cx="5.5" cy="2" r="1.2" fill="#3a3c40"/><circle cx="9.6" cy="2" r="1.2" fill="#3a3c40"/></svg>
<div class="ab" style="left:371px;top:411px;line-height:24px;font-size:14px;font-weight:bold;color:#409eff;white-space:nowrap">111222-export2</div>
<div class="ab t12" style="left:571px;top:411px;line-height:24px">配置组模板</div>
<div class="ab t12" style="left:721px;top:411px;line-height:24px">项目级</div>
<div class="ab t12" style="left:871px;top:411px;line-height:24px">jmj's测试</div>
<div class="ab" style="left:1774px;top:409px;width:99px;height:29px;border:1px solid #dcdfe6;border-radius:2px;background:#fff"></div>
<div class="ab" style="left:1844px;top:415px;width:1px;height:16px;background:#ebeef5"></div>
<svg class="ab" style="left:1790px;top:417px" width="12" height="13" viewBox="0 0 12 13"><path d="M1.6 11.6 L1.2 9.2 L7.2 1.6 L9.2 3.1 L3.2 10.7 Z" stroke="#606266" stroke-width="0.85" fill="none" stroke-linejoin="round"/><path d="M6.2 11.5 H11" stroke="#606266" stroke-width="0.9"/></svg>
<div class="ab" style="left:1805px;top:409px;height:29px;line-height:29px;font-size:12px;font-weight:bold;color:#606266;white-space:nowrap">编辑</div>
<svg class="ab" style="left:1853px;top:421px" width="11" height="4" viewBox="0 0 11 4"><circle cx="1.4" cy="2" r="1.2" fill="#3a3c40"/><circle cx="5.5" cy="2" r="1.2" fill="#3a3c40"/><circle cx="9.6" cy="2" r="1.2" fill="#3a3c40"/></svg>
<div class="ab" style="left:371px;top:453px;line-height:24px;font-size:14px;font-weight:bold;color:#409eff;white-space:nowrap">33333-export</div>
<div class="ab t12" style="left:571px;top:453px;line-height:24px">配置组模板</div>
<div class="ab t12" style="left:721px;top:453px;line-height:24px">项目级</div>
<div class="ab t12" style="left:871px;top:453px;line-height:24px">zxytest</div>
<div class="ab" style="left:1774px;top:451px;width:99px;height:29px;border:1px solid #dcdfe6;border-radius:2px;background:#fff"></div>
<div class="ab" style="left:1844px;top:457px;width:1px;height:16px;background:#ebeef5"></div>
<svg class="ab" style="left:1790px;top:459px" width="12" height="13" viewBox="0 0 12 13"><path d="M1.6 11.6 L1.2 9.2 L7.2 1.6 L9.2 3.1 L3.2 10.7 Z" stroke="#606266" stroke-width="0.85" fill="none" stroke-linejoin="round"/><path d="M6.2 11.5 H11" stroke="#606266" stroke-width="0.9"/></svg>
<div class="ab" style="left:1805px;top:451px;height:29px;line-height:29px;font-size:12px;font-weight:bold;color:#606266;white-space:nowrap">编辑</div>
<svg class="ab" style="left:1853px;top:463px" width="11" height="4" viewBox="0 0 11 4"><circle cx="1.4" cy="2" r="1.2" fill="#3a3c40"/><circle cx="5.5" cy="2" r="1.2" fill="#3a3c40"/><circle cx="9.6" cy="2" r="1.2" fill="#3a3c40"/></svg>
<div class="ab" style="left:371px;top:495px;line-height:24px;font-size:14px;font-weight:bold;color:#409eff;white-space:nowrap">3333344444-export</div>
<div class="ab t12" style="left:571px;top:495px;line-height:24px">配置组模板</div>
<div class="ab t12" style="left:721px;top:495px;line-height:24px">项目级</div>
<div class="ab t12" style="left:871px;top:495px;line-height:24px">zxytest</div>
<div class="ab" style="left:1774px;top:493px;width:99px;height:29px;border:1px solid #dcdfe6;border-radius:2px;background:#fff"></div>
<div class="ab" style="left:1844px;top:499px;width:1px;height:16px;background:#ebeef5"></div>
<svg class="ab" style="left:1790px;top:501px" width="12" height="13" viewBox="0 0 12 13"><path d="M1.6 11.6 L1.2 9.2 L7.2 1.6 L9.2 3.1 L3.2 10.7 Z" stroke="#606266" stroke-width="0.85" fill="none" stroke-linejoin="round"/><path d="M6.2 11.5 H11" stroke="#606266" stroke-width="0.9"/></svg>
<div class="ab" style="left:1805px;top:493px;height:29px;line-height:29px;font-size:12px;font-weight:bold;color:#606266;white-space:nowrap">编辑</div>
<svg class="ab" style="left:1853px;top:505px" width="11" height="4" viewBox="0 0 11 4"><circle cx="1.4" cy="2" r="1.2" fill="#3a3c40"/><circle cx="5.5" cy="2" r="1.2" fill="#3a3c40"/><circle cx="9.6" cy="2" r="1.2" fill="#3a3c40"/></svg>
<div class="ab" style="left:371px;top:537px;line-height:24px;font-size:14px;font-weight:bold;color:#409eff;white-space:nowrap">code-repo-test-export</div>
<div class="ab t12" style="left:571px;top:537px;line-height:24px">配置组模板</div>
<div class="ab t12" style="left:721px;top:537px;line-height:24px">项目级</div>
<div class="ab t12" style="left:871px;top:537px;line-height:24px">jmj's测试</div>
<div class="ab" style="left:1774px;top:535px;width:99px;height:29px;border:1px solid #dcdfe6;border-radius:2px;background:#fff"></div>
<div class="ab" style="left:1844px;top:541px;width:1px;height:16px;background:#ebeef5"></div>
<svg class="ab" style="left:1790px;top:543px" width="12" height="13" viewBox="0 0 12 13"><path d="M1.6 11.6 L1.2 9.2 L7.2 1.6 L9.2 3.1 L3.2 10.7 Z" stroke="#606266" stroke-width="0.85" fill="none" stroke-linejoin="round"/><path d="M6.2 11.5 H11" stroke="#606266" stroke-width="0.9"/></svg>
<div class="ab" style="left:1805px;top:535px;height:29px;line-height:29px;font-size:12px;font-weight:bold;color:#606266;white-space:nowrap">编辑</div>
<svg class="ab" style="left:1853px;top:547px" width="11" height="4" viewBox="0 0 11 4"><circle cx="1.4" cy="2" r="1.2" fill="#3a3c40"/><circle cx="5.5" cy="2" r="1.2" fill="#3a3c40"/><circle cx="9.6" cy="2" r="1.2" fill="#3a3c40"/></svg>
<div class="ab" style="left:371px;top:579px;line-height:24px;font-size:14px;font-weight:bold;color:#409eff;white-space:nowrap">code-repo-test-export111</div>
<div class="ab t12" style="left:571px;top:579px;line-height:24px">配置组模板</div>
<div class="ab t12" style="left:721px;top:579px;line-height:24px">项目级</div>
<div class="ab t12" style="left:871px;top:579px;line-height:24px">jmj's测试</div>
<div class="ab t12" style="left:1323px;top:579px;line-height:24px">11111</div>
<div class="ab" style="left:1774px;top:577px;width:99px;height:29px;border:1px solid #dcdfe6;border-radius:2px;background:#fff"></div>
<div class="ab" style="left:1844px;top:583px;width:1px;height:16px;background:#ebeef5"></div>
<svg class="ab" style="left:1790px;top:585px" width="12" height="13" viewBox="0 0 12 13"><path d="M1.6 11.6 L1.2 9.2 L7.2 1.6 L9.2 3.1 L3.2 10.7 Z" stroke="#606266" stroke-width="0.85" fill="none" stroke-linejoin="round"/><path d="M6.2 11.5 H11" stroke="#606266" stroke-width="0.9"/></svg>
<div class="ab" style="left:1805px;top:577px;height:29px;line-height:29px;font-size:12px;font-weight:bold;color:#606266;white-space:nowrap">编辑</div>
<svg class="ab" style="left:1853px;top:589px" width="11" height="4" viewBox="0 0 11 4"><circle cx="1.4" cy="2" r="1.2" fill="#3a3c40"/><circle cx="5.5" cy="2" r="1.2" fill="#3a3c40"/><circle cx="9.6" cy="2" r="1.2" fill="#3a3c40"/></svg>
<div class="ab" style="left:371px;top:618px;line-height:24px;font-size:14px;font-weight:bold;color:#409eff;white-space:nowrap">code-repo-test-export1111<br>1</div>
<div class="ab t12" style="left:571px;top:631px;line-height:24px">配置组模板</div>
<div class="ab t12" style="left:721px;top:631px;line-height:24px">项目级</div>
<div class="ab t12" style="left:871px;top:631px;line-height:24px">jmj's测试</div>
<div class="ab" style="left:1774px;top:629px;width:99px;height:29px;border:1px solid #dcdfe6;border-radius:2px;background:#fff"></div>
<div class="ab" style="left:1844px;top:635px;width:1px;height:16px;background:#ebeef5"></div>
<svg class="ab" style="left:1790px;top:637px" width="12" height="13" viewBox="0 0 12 13"><path d="M1.6 11.6 L1.2 9.2 L7.2 1.6 L9.2 3.1 L3.2 10.7 Z" stroke="#606266" stroke-width="0.85" fill="none" stroke-linejoin="round"/><path d="M6.2 11.5 H11" stroke="#606266" stroke-width="0.9"/></svg>
<div class="ab" style="left:1805px;top:629px;height:29px;line-height:29px;font-size:12px;font-weight:bold;color:#606266;white-space:nowrap">编辑</div>
<svg class="ab" style="left:1853px;top:641px" width="11" height="4" viewBox="0 0 11 4"><circle cx="1.4" cy="2" r="1.2" fill="#3a3c40"/><circle cx="5.5" cy="2" r="1.2" fill="#3a3c40"/><circle cx="9.6" cy="2" r="1.2" fill="#3a3c40"/></svg>
<div class="ab" style="left:371px;top:682px;line-height:24px;font-size:14px;font-weight:bold;color:#409eff;white-space:nowrap">code-repo-test-export2</div>
<div class="ab t12" style="left:571px;top:682px;line-height:24px">配置组模板</div>
<div class="ab t12" style="left:721px;top:682px;line-height:24px">项目级</div>
<div class="ab t12" style="left:871px;top:682px;line-height:24px">jmj's测试</div>
<div class="ab" style="left:1774px;top:680px;width:99px;height:29px;border:1px solid #dcdfe6;border-radius:2px;background:#fff"></div>
<div class="ab" style="left:1844px;top:686px;width:1px;height:16px;background:#ebeef5"></div>
<svg class="ab" style="left:1790px;top:688px" width="12" height="13" viewBox="0 0 12 13"><path d="M1.6 11.6 L1.2 9.2 L7.2 1.6 L9.2 3.1 L3.2 10.7 Z" stroke="#606266" stroke-width="0.85" fill="none" stroke-linejoin="round"/><path d="M6.2 11.5 H11" stroke="#606266" stroke-width="0.9"/></svg>
<div class="ab" style="left:1805px;top:680px;height:29px;line-height:29px;font-size:12px;font-weight:bold;color:#606266;white-space:nowrap">编辑</div>
<svg class="ab" style="left:1853px;top:692px" width="11" height="4" viewBox="0 0 11 4"><circle cx="1.4" cy="2" r="1.2" fill="#3a3c40"/><circle cx="5.5" cy="2" r="1.2" fill="#3a3c40"/><circle cx="9.6" cy="2" r="1.2" fill="#3a3c40"/></svg>
<div class="ab" style="left:371px;top:724px;line-height:24px;font-size:14px;font-weight:bold;color:#409eff;white-space:nowrap">demowar-export</div>
<div class="ab t12" style="left:571px;top:724px;line-height:24px">配置组模板</div>
<div class="ab t12" style="left:721px;top:724px;line-height:24px">平台级</div>
<div class="ab" style="left:1774px;top:722px;width:99px;height:29px;border:1px solid #dcdfe6;border-radius:2px;background:#fff"></div>
<div class="ab" style="left:1844px;top:728px;width:1px;height:16px;background:#ebeef5"></div>
<svg class="ab" style="left:1790px;top:730px" width="12" height="13" viewBox="0 0 12 13"><path d="M1.6 11.6 L1.2 9.2 L7.2 1.6 L9.2 3.1 L3.2 10.7 Z" stroke="#606266" stroke-width="0.85" fill="none" stroke-linejoin="round"/><path d="M6.2 11.5 H11" stroke="#606266" stroke-width="0.9"/></svg>
<div class="ab" style="left:1805px;top:722px;height:29px;line-height:29px;font-size:12px;font-weight:bold;color:#606266;white-space:nowrap">编辑</div>
<svg class="ab" style="left:1853px;top:734px" width="11" height="4" viewBox="0 0 11 4"><circle cx="1.4" cy="2" r="1.2" fill="#3a3c40"/><circle cx="5.5" cy="2" r="1.2" fill="#3a3c40"/><circle cx="9.6" cy="2" r="1.2" fill="#3a3c40"/></svg>
<div class="ab" style="left:371px;top:766px;line-height:24px;font-size:14px;font-weight:bold;color:#409eff;white-space:nowrap">demowar-export-zxytest</div>
<div class="ab t12" style="left:571px;top:766px;line-height:24px">配置组模板</div>
<div class="ab t12" style="left:721px;top:766px;line-height:24px">平台级</div>
<div class="ab" style="left:1774px;top:764px;width:99px;height:29px;border:1px solid #dcdfe6;border-radius:2px;background:#fff"></div>
<div class="ab" style="left:1844px;top:770px;width:1px;height:16px;background:#ebeef5"></div>
<svg class="ab" style="left:1790px;top:772px" width="12" height="13" viewBox="0 0 12 13"><path d="M1.6 11.6 L1.2 9.2 L7.2 1.6 L9.2 3.1 L3.2 10.7 Z" stroke="#606266" stroke-width="0.85" fill="none" stroke-linejoin="round"/><path d="M6.2 11.5 H11" stroke="#606266" stroke-width="0.9"/></svg>
<div class="ab" style="left:1805px;top:764px;height:29px;line-height:29px;font-size:12px;font-weight:bold;color:#606266;white-space:nowrap">编辑</div>
<svg class="ab" style="left:1853px;top:776px" width="11" height="4" viewBox="0 0 11 4"><circle cx="1.4" cy="2" r="1.2" fill="#3a3c40"/><circle cx="5.5" cy="2" r="1.2" fill="#3a3c40"/><circle cx="9.6" cy="2" r="1.2" fill="#3a3c40"/></svg>
<div class="ab" style="left:1460px;top:819px;height:28px;line-height:28px;font-size:13px;color:#606266;white-space:nowrap">共 21 条</div>
<div class="ab" style="left:1523px;top:819px;width:100px;height:28px;border:1px solid #dcdfe6;border-radius:2px"></div>
<div class="ab" style="left:1541px;top:820px;height:28px;line-height:28px;font-size:13px;color:#606266;white-space:nowrap">20条/页</div>
<svg class="ab" style="left:1605px;top:831px" width="9" height="5" viewBox="0 0 9 5"><path d="M0.5 0.5 L4.5 4.5 L8.5 0.5" stroke="#c0c4cc" stroke-width="1" fill="none"/></svg>
<div class="ab" style="left:1643px;top:819px;width:30px;height:28px;background:#f7f7f8;border-radius:2px"></div>
<svg class="ab" style="left:1655px;top:829px" width="6" height="9" viewBox="0 0 6 9"><path d="M5 0.5 L1 4.5 L5 8.5" stroke="#c0c4cc" stroke-width="1.2" fill="none"/></svg>
<div class="ab" style="left:1683px;top:819px;width:30px;height:28px;background:#1f2a3d;border-radius:2px;color:#fff;font-size:13px;font-weight:bold;line-height:28px;text-align:center">1</div>
<div class="ab" style="left:1723px;top:819px;width:30px;height:28px;background:#f4f4f5;border-radius:2px;color:#606266;font-size:13px;font-weight:bold;line-height:28px;text-align:center">2</div>
<div class="ab" style="left:1763px;top:819px;width:30px;height:28px;background:#f4f4f5;border-radius:2px"></div>
<svg class="ab" style="left:1775px;top:829px" width="6" height="9" viewBox="0 0 6 9"><path d="M1 0.5 L5 4.5 L1 8.5" stroke="#303133" stroke-width="1.2" fill="none"/></svg>
<div class="ab" style="left:1822px;top:820px;height:28px;line-height:28px;font-size:13px;color:#606266;white-space:nowrap">前往</div>
<div class="ab" style="left:1852px;top:819px;width:46px;height:28px;border:1px solid #dcdfe6;border-radius:2px;text-align:center;line-height:28px;font-size:13px;color:#606266">1</div>
<div class="ab" style="left:1901px;top:820px;height:28px;line-height:28px;font-size:13px;color:#606266;white-space:nowrap">页</div>
</body></html>
